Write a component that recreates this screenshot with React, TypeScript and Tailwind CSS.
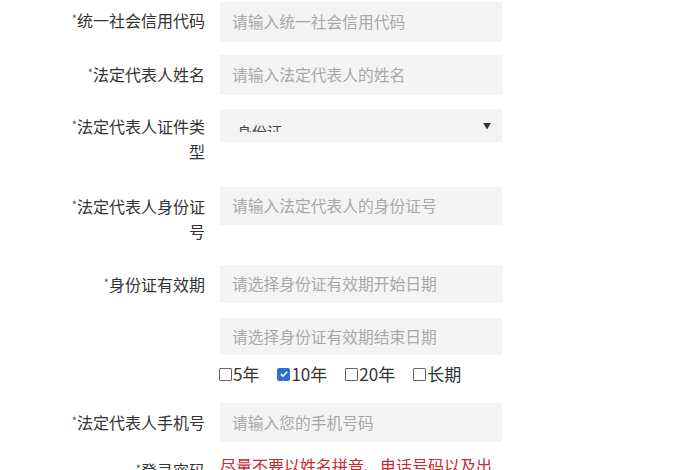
const font = { fontFamily: '"Noto Sans CJK SC", "Noto Sans", sans-serif' };

function Label({ text, pt, className = '' }: { text: string; pt: string; className?: string }) {
  return (
    <div className={`w-[140px] shrink-0 text-right text-[16px] leading-[25px] text-[#333] ${pt} ${className}`}>
      <span className="relative -top-[4px] text-[11px] leading-none text-[#555]">*</span>
      {text}
    </div>
  );
}

function Input({ placeholder, className = 'h-[39px]' }: { placeholder: string; className?: string }) {
  return (
    <div className={`flex w-[282px] items-center bg-[#f4f4f4] pl-[12px] text-[15.75px] text-[#a8a8a8] ${className}`}>
      {placeholder}
    </div>
  );
}

function Check({ label, checked }: { label: string; checked?: boolean }) {
  return (
    <div className="flex items-center">
      {checked ? (
        <span className="flex h-[13px] w-[13px] items-center justify-center rounded-[2px] bg-[#2f6fd0]">
          <svg viewBox="0 0 12 12" className="h-[10px] w-[10px]">
            <path d="M2.2 6.2 L4.8 8.6 L9.8 3.2" fill="none" stroke="#fff" strokeWidth="1.8" />
          </svg>
        </span>
      ) : (
        <span className="h-[13px] w-[13px] rounded-[1px] border border-[#666] bg-white" />
      )}
      <span className="ml-[1px] text-[17px] text-[#333]">{label}</span>
    </div>
  );
}

export default function App() {
  return (
    <div className="h-[470px] w-[700px] overflow-hidden bg-white" style={font}>
      <div className="flex flex-col pl-[65px] pt-[2px]">
        <div className="flex items-start gap-[15px]">
          <Label text="统一社会信用代码" pt="pt-[6px]" />
          <Input placeholder="请输入统一社会信用代码" className="h-[40px]" />
        </div>

        <div className="mt-[13px] flex items-start gap-[15px]">
          <Label text="法定代表人姓名" pt="pt-[7px]" />
          <Input placeholder="请输入法定代表人的姓名" className="h-[40px]" />
        </div>

        <div className="mt-[14px] flex items-start gap-[15px]">
          <Label text="法定代表人证件类型" pt="pt-[5px]" />
          <div className="flex h-[33px] w-[282px] items-center justify-between bg-[#f4f4f4] pl-[17px] pr-[11px]">
            <div className="mt-[3px] h-[9px] overflow-hidden text-[15px] leading-[18px] text-[#444]">身份证</div>
            <span className="text-[8px] text-[#333]">▼</span>
          </div>
        </div>

        <div className="mt-[23px] flex items-start gap-[15px]">
          <Label text="法定代表人身份证号" pt="pt-[7px]" />
          <Input placeholder="请输入法定代表人的身份证号" className="h-[38px]" />
        </div>

        <div className="mt-[21px] flex items-start gap-[15px]">
          <Label text="身份证有效期" pt="pt-[7px]" />
          <Input placeholder="请选择身份证有效期开始日期" className="h-[38px]" />
        </div>

        <div className="mt-[15px] flex items-start gap-[15px]">
          <div className="w-[140px] shrink-0" />
          <Input placeholder="请选择身份证有效期结束日期" className="h-[37px]" />
        </div>

        <div className="mt-[8px] flex h-[22px] items-center gap-[15px]">
          <div className="w-[140px] shrink-0" />
          <div className="-ml-[1px] flex items-center gap-[18px]">
            <Check label="5年" />
            <Check label="10年" checked />
            <Check label="20年" />
            <Check label="长期" />
          </div>
        </div>

        <div className="mt-[18px] flex items-start gap-[15px]">
          <Label text="法定代表人手机号" pt="pt-[7px]" />
          <Input placeholder="请输入您的手机号码" className="h-[39px]" />
        </div>

        <div className="mt-[11px] flex items-start gap-[15px]">
          <Label text="登录密码" pt="pt-[5px]" />
          <div className="w-[282px] text-[16px] leading-[25px] text-[#c8282e]">
            尽量不要以姓名拼音、电话号码以及出生日期作为密码，以免被他人盗用
          </div>
        </div>
      </div>
    </div>
  );
}
